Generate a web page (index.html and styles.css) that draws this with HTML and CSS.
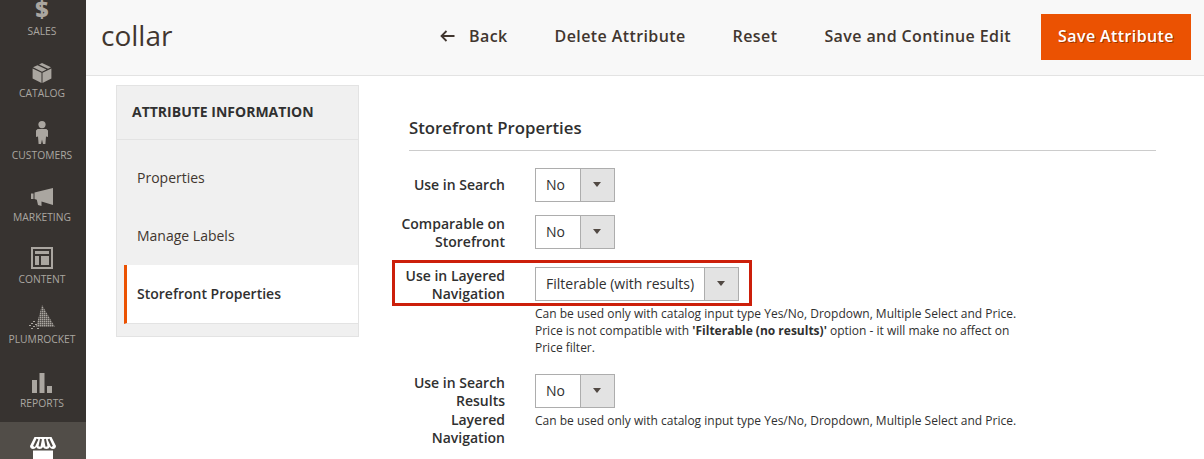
FILE: index.html
```html
<!DOCTYPE html>
<html lang="en">
<head>
<meta charset="utf-8">
<title>collar</title>
<link rel="stylesheet" href="styles.css">
</head>
<body>
<div class="app">
  <nav class="sidebar">
    <a class="nav-item first"><svg class="ico dollar-ico" viewBox="0 0 14 22" width="14" height="22"><text x="7" y="18.500" text-anchor="middle" class="dollar">$</text></svg><span>SALES</span></a>
    <a class="nav-item"><svg class="ico" viewBox="0 0 20 20" width="20" height="20"><path d="M10 0l9 4.2-3 1.5-9-4.3zM5.500 2.300l9 4.300L10 8.700 1 4.300zM.6 5.400l8.900 4.300V20L.6 15.600zM19.400 5.400v10.200L10.500 20V9.700z"/></svg><span>CATALOG</span></a>
    <a class="nav-item"><svg class="ico" viewBox="0 0 14 24" width="14" height="24"><circle cx="7" cy="3.600" r="3.600"/><path d="M2.600 8h8.800l1.600 1.600V16l-2-.6-.6 7.600H8L7 18.500 6 23H3.600l-.6-7.600-2 .6V9.600z"/></svg><span>CUSTOMERS</span></a>
    <a class="nav-item"><svg class="ico" viewBox="0 0 22 20" width="22" height="20"><path d="M0 6.500h2.500V12H0zM3.500 5.500L22 1v17L10.500 14.500v4.500l-3.500-1L5.800 12.800 3.500 12z"/></svg><span>MARKETING</span></a>
    <a class="nav-item"><svg class="ico" viewBox="0 0 22 22" width="22" height="22"><path fill-rule="evenodd" d="M0 0h22v22H0zM2 2v18h18V2zM4 4h14v3H4zM4 9h4v9H4zM10 9h8v9h-8z"/></svg><span>CONTENT</span></a>
    <a class="nav-item plum"><svg class="ico pyramid" viewBox="0 0 28 24" width="28" height="24"><defs><pattern id="dots" width="2" height="2" patternUnits="userSpaceOnUse"><rect width="1.500" height="1.500" fill="#aaa6a0"/></pattern></defs><path fill="url(#dots)" d="M14 0l13 22H8z"/><path d="M5 16h2v1H5zM3 18h2v1H3zM7 19h2v1H7zM1 20h2v1H1zM5 21h2v1H5zM3 23h2v1H3zM9 23h2v1H9z"/></svg><span>PLUMROCKET</span></a>
    <a class="nav-item rep"><svg class="ico" viewBox="0 0 20 20" width="20" height="20"><path d="M0 7h5v13H0zM7.500 0h5v20h-5zM15 13h5v7h-5z"/></svg><span>REPORTS</span></a>
    <a class="nav-item active"><svg class="ico store" viewBox="0 0 26 24" width="26" height="24"><path d="M4.500 0h17L26 9c0 2-1.500 3-3 3s-2.700-1-3.300-2c-.6 1-1.700 2-3.300 2s-2.700-1-3.400-2c-.7 1-1.800 2-3.400 2s-2.700-1-3.300-2c-.6 1-1.800 2-3.300 2s-3-1-3-3z"/><path d="M3 13.500h20V24H3z"/><path class="store-lines" d="M7.500 2L4 9.500M11 2L9.500 9.500M15 2l1.500 7.500M18.500 2L22 9.500"/></svg></a>
  </nav>
  <div class="main">
    <header class="topbar">
      <h1 class="page-title">collar</h1>
      <div class="actions">
        <a class="action back"><svg viewBox="0 0 15 12" width="15" height="12"><path d="M14.500 6H1.500M6.500 1L1.500 6l5 5" fill="none" stroke="currentColor" stroke-width="1.800"/></svg>Back</a>
        <a class="action">Delete Attribute</a>
        <a class="action">Reset</a>
        <a class="action">Save and Continue Edit</a>
        <a class="primary">Save Attribute</a>
      </div>
    </header>
    <div class="content">
      <aside class="tabs">
        <div class="tabs-title">ATTRIBUTE INFORMATION</div>
        <a class="tab">Properties</a>
        <a class="tab">Manage Labels</a>
        <a class="tab current">Storefront Properties</a>
      </aside>
      <section class="form">
        <h2 class="form-title">Storefront Properties</h2>
        <div class="row">
          <label class="label one">Use in Search</label>
          <div class="control"><div class="select"><span class="val">No</span><span class="arrow"></span></div></div>
        </div>
        <div class="row">
          <label class="label">Comparable on Storefront</label>
          <div class="control"><div class="select"><span class="val">No</span><span class="arrow"></span></div></div>
        </div>
        <div class="row highlighted">
          <span class="red-box"></span>
          <label class="label">Use in Layered Navigation</label>
          <div class="control">
            <div class="select wide"><span class="val">Filterable (with results)</span><span class="arrow"></span></div>
            <p class="note">Can be used only with catalog input type Yes/No, Dropdown, Multiple Select and Price.<br>Price is not compatible with <b>'Filterable (no results)'</b> option - it will make no affect on<br>Price filter.</p>
          </div>
        </div>
        <div class="row last">
          <label class="label">Use in Search Results Layered Navigation</label>
          <div class="control">
            <div class="select"><span class="val">No</span><span class="arrow"></span></div>
            <p class="note">Can be used only with catalog input type Yes/No, Dropdown, Multiple Select and Price.</p>
          </div>
        </div>
      </section>
    </div>
  </div>
</div>
</body>
</html>
```
FILE: styles.css
```css
* { box-sizing: border-box; }
html, body { margin: 0; height: 459px; overflow: hidden; background: #fff; }
body { font-family: "Open Sans", "Liberation Sans", sans-serif; color: #303030; font-size: 14px; }
.app { display: flex; height: 459px; overflow: hidden; }

.sidebar { width: 86px; flex: none; background: #373330; display: flex; flex-direction: column; height: 459px; overflow: hidden; }
.nav-item { height: 62px; flex: none; display: flex; flex-direction: column; align-items: center; justify-content: flex-end; padding: 0 2px 7px 0; color: #aaa6a0; font-size: 10.300px; line-height: 14px; }
.nav-item.first { height: 45px; }
.nav-item.plum { height: 60px; }
.nav-item.rep { height: 64px; }
.nav-item span { display: block; margin-top: 3px; }
.ico { display: block; fill: #aaa6a0; flex: none; }
.dollar { font-family: "Open Sans", sans-serif; font-weight: 800; font-size: 23px; fill: #aaa6a0; }
.nav-item.active { background: #514d48; height: 37px; margin-top: 5px; justify-content: flex-start; padding: 15px 0 0; overflow: hidden; }
.store { fill: #fff; }
.store-lines { fill: none; stroke: #514d48; stroke-width: 2; }

.main { flex: 1; min-width: 0; }
.topbar { height: 76px; background: #f8f8f8; border-bottom: 1px solid #e3e3e3; display: flex; align-items: center; justify-content: space-between; padding: 0 13px 3px 15px; }
.page-title { margin: -3px 0 0; font-size: 28px; font-weight: 400; line-height: 36px; color: #41362f; }
.actions { display: flex; align-items: center; gap: 47px; }
.action { font-size: 16px; font-weight: 600; letter-spacing: .4px; color: #41362f; line-height: 24px; }
.back { display: flex; align-items: center; gap: 14px; }
.primary { display: block; width: 150px; height: 46px; line-height: 44px; margin: 1px 0 -1px -17px; background: #eb5202; color: #fff; font-size: 16px; font-weight: 600; letter-spacing: .4px; text-align: center; text-shadow: 1px 1px 0 rgba(0,0,0,.35); }

.content { display: flex; align-items: flex-start; padding: 9px 48px 0 30px; }
.tabs { width: 243px; flex: none; height: 252px; background: #f0f0f0; border: 1px solid #e3e3e3; display: flex; flex-direction: column; }
.tabs-title { height: 54px; flex: none; border-bottom: 1px solid #e3e3e3; padding-left: 15px; line-height: 52px; font-size: 14px; font-weight: 700; color: #303030; }
.tab { height: 58px; flex: none; display: flex; align-items: center; padding-left: 20px; color: #41362f; font-size: 14px; }
.tab:nth-child(2) { margin-top: 8px; }
.tab.current { background: #fff; height: 59px; margin: 1px 0 0 7px; padding: 0 0 2px 10px; border-left: 3px solid #eb5202; border-bottom: 1px solid #e3e3e3; font-weight: 600; color: #303030; }

.form { width: 747px; flex: none; margin-left: 50px; }
.form-title { margin: 0; height: 66px; padding-top: 30px; border-bottom: 1px solid #cccccc; font-size: 16.800px; font-weight: 600; line-height: 26px; color: #303030; }
.row { position: relative; display: flex; align-items: flex-start; margin-top: 17px; }
.row + .row { margin-top: 13px; }
.row.highlighted { margin-top: 15px; }
.row.last { margin-top: 18px; }
.label { width: 105px; flex: none; margin-left: -9px; text-align: right; font-weight: 600; font-size: 14px; line-height: 18.400px; color: #303030; }
.label.one { padding-top: 8px; }
.control { margin-left: 30px; min-width: 0; }
.select { width: 80px; height: 34px; display: flex; border: 1px solid #adadad; background: #fff; }
.select.wide { width: 204px; }
.val { flex: 1; padding-left: 10px; line-height: 32px; font-size: 14px; color: #303030; white-space: nowrap; }
.arrow { width: 34px; flex: none; background: #e3e3e3; border-left: 1px solid #adadad; position: relative; }
.arrow::after { content: ""; position: absolute; left: 12px; top: 13px; border: 4.500px solid transparent; border-top: 5.500px solid #514943; border-bottom: 0; }
.note { margin: 4px 0 0; font-size: 12px; line-height: 17px; color: #303030; white-space: nowrap; }
.red-box { position: absolute; left: -17px; top: -7px; width: 360px; height: 46px; border: 3px solid #cc1f0a; pointer-events: none; }
```
